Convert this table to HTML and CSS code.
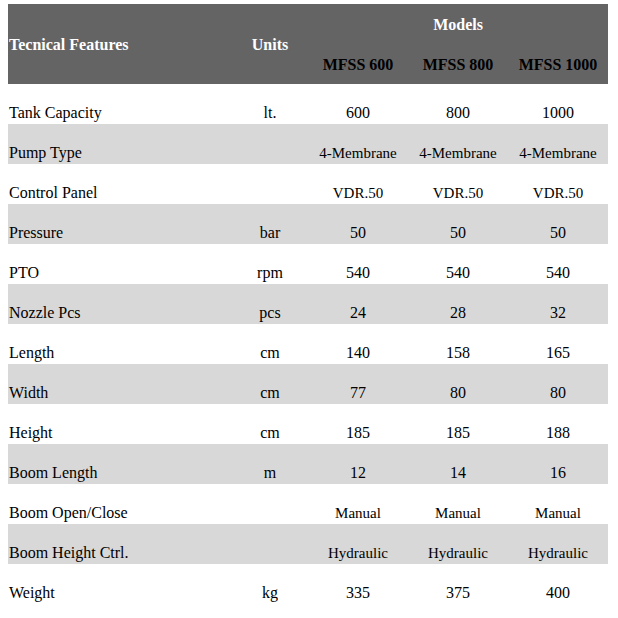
FILE: index.html
```html
<!DOCTYPE html>
<html>
<head>
<meta charset="utf-8">
<link rel="stylesheet" href="styles.css">
</head>
<body>
<div class="wrap">
<table class="spec">
  <colgroup>
    <col class="c-feat"><col class="c-unit"><col class="c-val"><col class="c-val"><col class="c-val">
  </colgroup>
  <thead>
    <tr class="hrow">
      <th class="h-feat" rowspan="2">Tecnical Features</th>
      <th class="h-unit" rowspan="2">Units</th>
      <th class="h-models" colspan="3">Models</th>
    </tr>
    <tr class="hrow">
      <th class="h-model">MFSS 600</th>
      <th class="h-model">MFSS 800</th>
      <th class="h-model">MFSS 1000</th>
    </tr>
  </thead>
  <tbody>
    <tr class="row"><td class="feat">Tank Capacity</td><td class="unit">lt.</td><td class="val">600</td><td class="val">800</td><td class="val">1000</td></tr>
    <tr class="row alt"><td class="feat">Pump Type</td><td class="unit"></td><td class="val txt">4-Membrane</td><td class="val txt">4-Membrane</td><td class="val txt">4-Membrane</td></tr>
    <tr class="row"><td class="feat">Control Panel</td><td class="unit"></td><td class="val txt">VDR.50</td><td class="val txt">VDR.50</td><td class="val txt">VDR.50</td></tr>
    <tr class="row alt"><td class="feat">Pressure</td><td class="unit">bar</td><td class="val">50</td><td class="val">50</td><td class="val">50</td></tr>
    <tr class="row"><td class="feat">PTO</td><td class="unit">rpm</td><td class="val">540</td><td class="val">540</td><td class="val">540</td></tr>
    <tr class="row alt"><td class="feat">Nozzle Pcs</td><td class="unit">pcs</td><td class="val">24</td><td class="val">28</td><td class="val">32</td></tr>
    <tr class="row"><td class="feat">Length</td><td class="unit">cm</td><td class="val">140</td><td class="val">158</td><td class="val">165</td></tr>
    <tr class="row alt"><td class="feat">Width</td><td class="unit">cm</td><td class="val">77</td><td class="val">80</td><td class="val">80</td></tr>
    <tr class="row"><td class="feat">Height</td><td class="unit">cm</td><td class="val">185</td><td class="val">185</td><td class="val">188</td></tr>
    <tr class="row alt"><td class="feat">Boom Length</td><td class="unit">m</td><td class="val">12</td><td class="val">14</td><td class="val">16</td></tr>
    <tr class="row"><td class="feat">Boom Open/Close</td><td class="unit"></td><td class="val txt">Manual</td><td class="val txt">Manual</td><td class="val txt">Manual</td></tr>
    <tr class="row alt"><td class="feat">Boom Height Ctrl.</td><td class="unit"></td><td class="val txt">Hydraulic</td><td class="val txt">Hydraulic</td><td class="val txt">Hydraulic</td></tr>
    <tr class="row"><td class="feat">Weight</td><td class="unit">kg</td><td class="val">335</td><td class="val">375</td><td class="val">400</td></tr>
  </tbody>
</table>
</div>
</body>
</html>
```
FILE: styles.css
```css
html, body {
  margin: 0;
  padding: 0;
  background: #ffffff;
}
body {
  font-family: "Liberation Serif", "Times New Roman", serif;
  font-size: 16px;
  color: #000000;
}
.wrap {
  padding: 4px 8px;
}
.spec {
  width: 600px;
  border-collapse: collapse;
  border-spacing: 0;
  table-layout: fixed;
}
.c-feat { width: 224px; }
.c-unit { width: 76px; }
.c-val { width: 100px; }

.hrow {
  height: 40px;
  background: #646464;
}
.spec th {
  padding: 2px 1px 0 1px;
  vertical-align: middle;
  font-weight: bold;
  font-size: 16px;
}
.h-feat {
  text-align: left;
  color: #ffffff;
}
.h-unit,
.h-models {
  text-align: center;
  color: #ffffff;
}
.h-model {
  text-align: center;
  color: #000000;
}

.row {
  height: 40px;
  background: #ffffff;
}
.row.alt {
  background: #d8d8d8;
}
.spec td {
  padding: 0 1px 2px 1px;
  vertical-align: bottom;
}
.feat {
  text-align: left;
}
.unit,
.val {
  text-align: center;
}
.txt {
  font-size: 15px;
}
```
